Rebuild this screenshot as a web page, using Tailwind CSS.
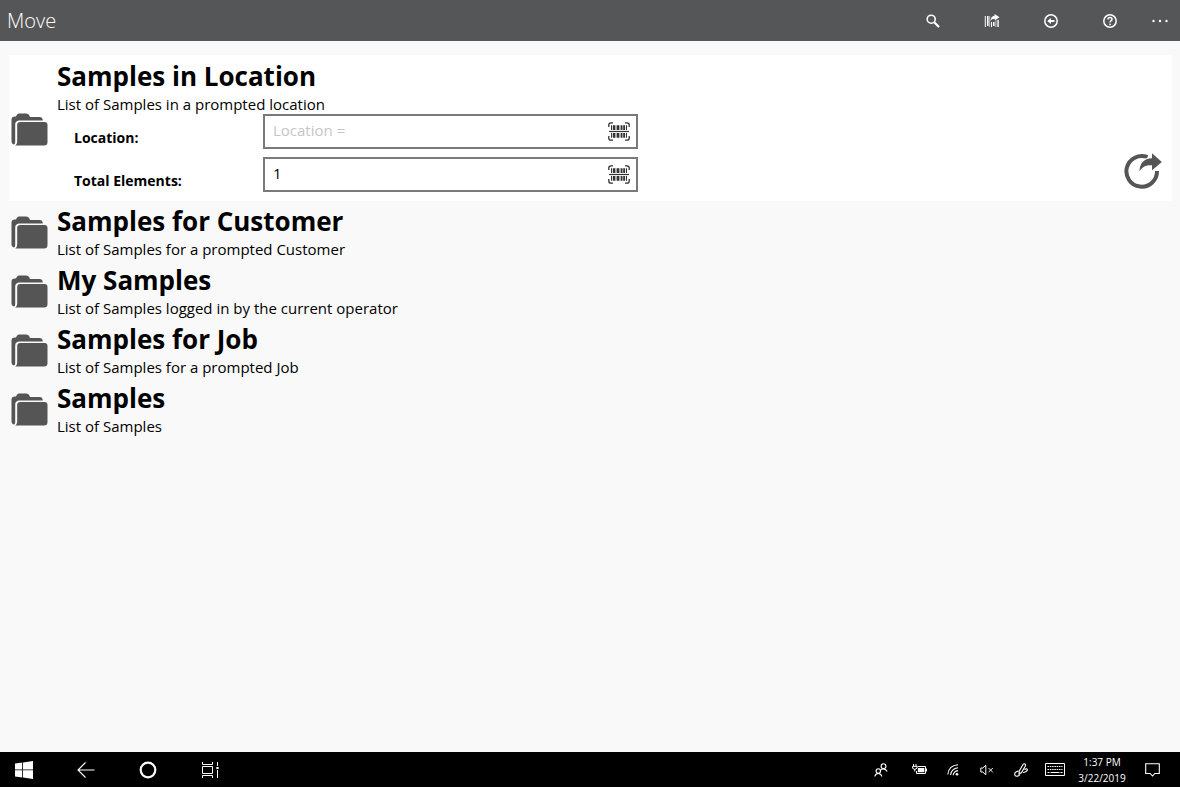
<!DOCTYPE html>
<html lang="en">
<head>
  <meta charset="UTF-8" />
  <meta name="viewport" content="width=device-width, initial-scale=1.0" />
  <title>Move</title>
  <script src="https://cdn.jsdelivr.net/npm/@tailwindcss/browser@4"></script>
</head>
<body class="min-h-screen flex flex-col bg-[#f9f9f9] text-black font-['Open_Sans','Noto_Sans',sans-serif]">

  <!-- SHARED ICONS -->
  <svg class="hidden" aria-hidden="true">
    <symbol id="icon-folder" viewBox="0 0 37 33">
      <path d="M3 31.500C1.200 31 .5 30 .5 28V6.500C.5 4.500 1.800 3.500 3.800 3.500H5C6 1 7 .5 9 .5H15C17 .5 18 1.300 19 4H28.500C30.500 4 31.800 5 31.800 7.500H9C5.500 7.500 4.200 9 4.200 12V28C4.200 30 4.200 30.800 3 31.500Z" />
      <path d="M9.500 9H33.500C35.500 9 36.500 10 36.500 12V29C36.500 31.500 35.500 32.500 33 32.500H4.200C5.600 31.500 6.200 30.500 6.200 28V12C6.200 10 7.200 9 9.500 9Z" />
    </symbol>
    <symbol id="icon-scan" viewBox="0 0 22 19">
      <path d="M.8 5V3Q.8.800 3 .8H5M17 .8H19Q21.200.800 21.200 3V5M.8 14V16Q.8 18.200 3 18.200H5M17 18.200H19Q21.200 18.200 21.200 16V14" fill="none" stroke="currentColor" stroke-width="1.300" />
      <path d="M1 8.900H21V10.100H1Z" />
      <path d="M3 3.300h1.200v4.700h-1.200zM5 3.300h2v4.700h-2zM7.600 3.300h.8v4.700h-.8zM9 3.300h2v4.700h-2zM11.600 3.300h.8v4.700h-.8zM13 3.300h1.500v4.700h-1.500zM15.200 3.300h1.800v4.700h-1.800zM17.900 3.300h1.100v4.700h-1.100z" />
      <path d="M3 11h1.200v4.700h-1.200zM5 11h2v4.700h-2zM7.600 11h.8v4.700h-.8zM9 11h2v4.700h-2zM11.600 11h.8v4.700h-.8zM13 11h1.500v4.700h-1.500zM15.200 11h1.800v4.700h-1.800zM17.900 11h1.100v4.700h-1.100z" />
    </symbol>
  </svg>

  <!-- APP BAR -->
  <header class="flex h-[41px] items-center justify-between bg-[#555658] pt-px pl-[7px] text-white">
    <h1 class="text-xl font-light">Move</h1>
    <nav class="flex h-full">
      <button class="flex w-[59px] items-center justify-center" aria-label="Search">
        <svg class="size-3.5" viewBox="0 0 14 14" fill="none" stroke="currentColor"><circle cx="5.200" cy="5.200" r="4" stroke-width="1.600" /><path d="M8.200 8.200L13 13" stroke-width="2.200" /></svg>
      </button>
      <button class="flex w-[59px] items-center justify-center" aria-label="Scan barcode">
        <svg class="h-3.5 w-4" viewBox="0 0 16 14" fill="currentColor">
          <path d="M.8 2h1v11h-1zM3 2h1.600v10h-1.600zM5.500 2h.6v11h-.6zM7 8h1v5h-1zM9 8h1.600v4h-1.600zM11.600 6.500h.7v6.500h-.7zM13.400 6h1.400v7h-1.400z" />
          <path d="M10.500 0L15.500 3.300L10.800 6.500V4.800C8.800 4.700 7.500 5.600 6.500 7C6.700 4 8 2 10.500 1.800Z" />
        </svg>
      </button>
      <button class="flex w-[59px] items-center justify-center" aria-label="Back">
        <svg class="size-3.5" viewBox="0 0 14 14" fill="none" stroke="currentColor"><circle cx="7" cy="7" r="6.200" stroke-width="1.500" /><path d="M3.200 7L7 4V6H10.500V8H7V10Z" fill="currentColor" stroke="none" /></svg>
      </button>
      <button class="flex w-[59px] items-center justify-center" aria-label="Help">
        <svg class="size-3.5" viewBox="0 0 14 14" fill="none" stroke="currentColor"><circle cx="7" cy="7" r="6.200" stroke-width="1.500" /><path d="M5 5.600C5 4.300 5.800 3.600 7 3.600S9 4.300 9 5.400C9 6.700 7 6.700 7 8.500" stroke-width="1.500" /><circle cx="7" cy="10.300" r=".9" fill="currentColor" stroke="none" /></svg>
      </button>
      <button class="flex w-[41px] items-center justify-center" aria-label="More">
        <svg class="h-1 w-4" viewBox="0 0 16 4" fill="currentColor"><circle cx="1.500" cy="2" r="1.200" /><circle cx="8" cy="2" r="1.200" /><circle cx="14.500" cy="2" r="1.200" /></svg>
      </button>
    </nav>
  </header>

  <!-- FOLDERS -->
  <main class="flex-1 pt-3.5 pr-2 pl-[9px]">
    <section class="flex items-center bg-white pr-2.5 pb-[9px] pl-0.5">
      <svg class="mt-[11px] mr-[9px] h-[33px] w-[37px] shrink-0 fill-[#555]"><use href="#icon-folder" /></svg>
      <form class="flex-1">
        <h2 class="pt-[3px] text-[26px] leading-9 font-bold">Samples in Location</h2>
        <p class="text-[15px] leading-5">List of Samples in a prompted location</p>
        <div class="grid max-w-[581px] grid-cols-[189px_1fr] gap-y-2 pl-[17px]">
          <label for="location" class="pt-3.5 text-sm leading-5 font-bold">Location:</label>
          <div class="flex h-[35px] items-center border-2 border-[#7a7a7a] bg-white pr-1.5">
            <input id="location" type="text" placeholder="Location =" class="h-full min-w-0 flex-1 pb-1 pl-2 text-[15px] outline-none placeholder:text-[#c6c6c6]" />
            <button type="button" aria-label="Scan location"><svg class="h-[19px] w-[22px] fill-[#333] text-[#333]"><use href="#icon-scan" /></svg></button>
          </div>
          <label for="total" class="pt-3.5 text-sm leading-5 font-bold">Total Elements:</label>
          <div class="flex h-[35px] items-center border-2 border-[#7a7a7a] bg-white pr-1.5">
            <input id="total" type="text" value="1" class="h-full min-w-0 flex-1 pb-1 pl-2 text-[15px] outline-none" />
            <button type="button" aria-label="Scan total elements"><svg class="h-[19px] w-[22px] fill-[#333] text-[#333]"><use href="#icon-scan" /></svg></button>
          </div>
        </div>
      </form>
      <button class="mb-0.5 self-end" aria-label="Run">
        <svg class="h-[37px] w-[38px]" viewBox="0 0 38 37" fill="none">
          <path d="M23.500 4.200A15.300 15.300 0 1 0 33 18" stroke="#555" stroke-width="4" />
          <path d="M28 .3L37.800 9L28 17.200V12.200C22 12 18.500 13.500 15.500 18.200C15.800 10.500 19.500 5.500 28 5.300Z" fill="#555" stroke="#fff" stroke-width="2" paint-order="stroke" />
        </svg>
      </button>
    </section>

    <a href="#customer" class="flex items-center pb-px pl-0.5">
      <svg class="mt-1 mr-[9px] h-[33px] w-[37px] shrink-0 fill-[#555]"><use href="#icon-folder" /></svg>
      <div>
        <h2 class="pt-0.5 text-[26px] leading-9 font-bold">Samples for Customer</h2>
        <p class="text-[15px] leading-5">List of Samples for a prompted Customer</p>
      </div>
    </a>
    <a href="#mine" class="flex items-center pb-px pl-0.5">
      <svg class="mt-1 mr-[9px] h-[33px] w-[37px] shrink-0 fill-[#555]"><use href="#icon-folder" /></svg>
      <div>
        <h2 class="pt-0.5 text-[26px] leading-9 font-bold">My Samples</h2>
        <p class="text-[15px] leading-5">List of Samples logged in by the current operator</p>
      </div>
    </a>
    <a href="#job" class="flex items-center pb-px pl-0.5">
      <svg class="mt-1 mr-[9px] h-[33px] w-[37px] shrink-0 fill-[#555]"><use href="#icon-folder" /></svg>
      <div>
        <h2 class="pt-0.5 text-[26px] leading-9 font-bold">Samples for Job</h2>
        <p class="text-[15px] leading-5">List of Samples for a prompted Job</p>
      </div>
    </a>
    <a href="#samples" class="flex items-center pb-px pl-0.5">
      <svg class="mt-1 mr-[9px] h-[33px] w-[37px] shrink-0 fill-[#555]"><use href="#icon-folder" /></svg>
      <div>
        <h2 class="pt-0.5 text-[26px] leading-9 font-bold">Samples</h2>
        <p class="text-[15px] leading-5">List of Samples</p>
      </div>
    </a>
  </main>

  <!-- TASKBAR -->
  <footer class="flex h-[35px] items-center justify-between bg-black text-white">
    <div class="flex h-full gap-3.5">
      <button class="flex w-12 items-center justify-center" aria-label="Start">
        <svg class="size-[18px]" viewBox="0 0 18 18" fill="currentColor"><path d="M0 2.600L7.200 1.500V8.500H0ZM8 1.400L18 0V8.500H8ZM0 9.300H7.200V16.400L0 15.400ZM8 9.300H18V18L8 16.500Z" /></svg>
      </button>
      <button class="flex w-12 items-center justify-center" aria-label="Back">
        <svg class="size-[18px]" viewBox="0 0 18 18" fill="none" stroke="currentColor" stroke-width="1.100"><path d="M17.500 9H1M8.500 1.500L1 9L8.500 16.500" /></svg>
      </button>
      <button class="flex w-12 items-center justify-center" aria-label="Cortana">
        <svg class="size-[18px]" viewBox="0 0 18 18" fill="none" stroke="currentColor" stroke-width="2.200"><circle cx="9" cy="9" r="7.300" /></svg>
      </button>
      <button class="flex w-12 items-center justify-center" aria-label="Task view">
        <svg class="size-[18px]" viewBox="0 0 18 18" fill="none" stroke="currentColor"><path d="M1.500 1V3.500H11.500V1M1.500 5.500H11.500V12.500H1.500ZM1.500 17V14.500H11.500V17M16.500 1V5M16.500 9V17" /><path d="M15.300 6h2.400v2h-2.400z" fill="currentColor" stroke="none" /></svg>
      </button>
    </div>
    <div class="flex h-full items-center pr-[7px]">
      <button class="mr-1 flex w-[34px] items-center justify-center" aria-label="People">
        <svg class="size-3.5" viewBox="0 0 14 14" fill="none" stroke="currentColor" stroke-width="1.100"><circle cx="9.500" cy="3.200" r="2.400" /><path d="M6.500 7.200C7.500 5.500 11.500 5.200 13.200 8.500" /><circle cx="4.300" cy="8" r="2.200" /><path d="M.8 13.500C1.500 9.500 7 9.500 7.800 13.500" /></svg>
      </button>
      <button class="flex w-[34px] items-center justify-center" aria-label="Battery">
        <svg class="h-3 w-[15px]" viewBox="0 0 15 12" fill="none" stroke="currentColor"><path d="M5.500 2.500H13.500V9.500H4.500V7M14.500 4.500V7.500" /><path d="M6 4H12.300V8.200H5.700Z" fill="currentColor" stroke="none" /><path d="M1.600 0V2M4 0V2M.6 2.400H5V4.300Q2.800 6.500.6 4.300ZM2.800 5V7.500" /></svg>
      </button>
      <button class="flex w-[34px] items-center justify-center" aria-label="Wi-Fi">
        <svg class="size-3" viewBox="0 0 12 12" fill="none" stroke="currentColor" stroke-width="1.100"><path d="M.8 10.500C1.300 5 5 1.300 11 .8M3.500 11C4 7 6.500 4.300 11 3.700M6.200 11.200C6.500 8.800 8.500 7 11 6.600" /><circle cx="10" cy="10.300" r="1.300" fill="currentColor" stroke="none" /></svg>
      </button>
      <button class="flex w-[34px] items-center justify-center" aria-label="Volume muted">
        <svg class="h-3 w-[14px]" viewBox="0 0 14 12" fill="none" stroke="currentColor"><path d="M.8 4H2.800L5.800 1.200V10.800L2.800 8H.8ZM8.500 4L12.800 8.300M12.800 4L8.500 8.300" /></svg>
      </button>
      <button class="flex w-[34px] items-center justify-center" aria-label="Pen">
        <svg class="size-3.5" viewBox="0 0 14 14" fill="none" stroke="currentColor" stroke-width="1.100"><path d="M5 11L5.300 8L9 1.500Q10 .3 11 1T11.200 3.200L7.500 9.500ZM4.500 8C1.500 8.500 0 10.500 1 12.200S5 13.200 6 11.500M10.500 6.500C12.500 5.200 14 6 13.200 7.500S10.500 9 9 9.500" /></svg>
      </button>
      <button class="mr-px flex w-[34px] items-center justify-center" aria-label="Touch keyboard">
        <svg class="h-[13px] w-5" viewBox="0 0 20 13" fill="none" stroke="currentColor"><path d="M.5.500H19.500V12.500H.5Z" /><path d="M2.500 3.500H17.500M2.500 6.500H17.500" stroke-dasharray="1.500 .8" /><path d="M2.500 9.500H4.500M5.500 9.500H14.500M15.500 9.500H17.500" /></svg>
      </button>
      <div class="w-[58px] text-center text-[10px] leading-4 whitespace-nowrap">
        <p>1:37 PM</p>
        <p>3/22/2019</p>
      </div>
      <button class="flex w-[42px] items-center justify-center" aria-label="Notifications">
        <svg class="h-3.5 w-[15px]" viewBox="0 0 15 14" fill="none" stroke="currentColor" stroke-width="1.100"><path d="M.7.700H14.300V10.500H9.800L7.500 13L5.200 10.500H.7Z" /></svg>
      </button>
    </div>
  </footer>
</body>
</html>
